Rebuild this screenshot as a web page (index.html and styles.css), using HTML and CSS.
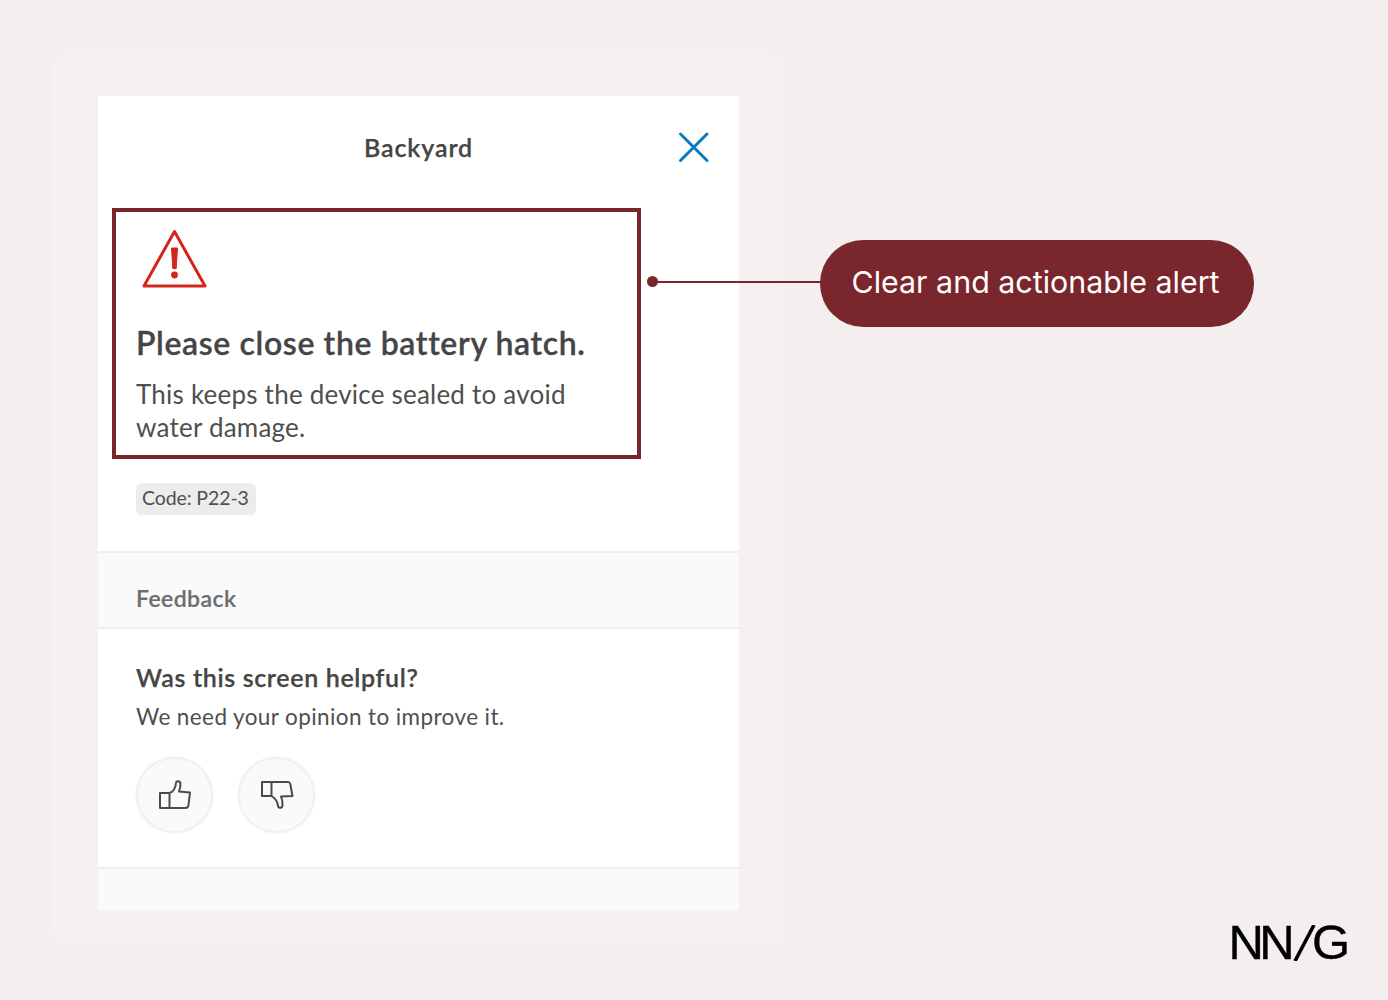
FILE: index.html
```html
<!DOCTYPE html>
<html>
<head>
    <title>Clear and actionable alert</title>
    <link rel="stylesheet" href="styles.css">
</head>
<body>
    <div class="frame">
        <div class="phone">
            <div class="top-bar">
                <span class="top-title">Backyard</span>
                <svg class="close-icon" width="32" height="32" viewBox="0 0 32 32">
                    <path d="M2.5 3 L29 29.5 M29 3 L2.5 29.5" fill="none" stroke="#0a78c2" stroke-width="3" stroke-linecap="round"/>
                </svg>
            </div>

            <div class="alert-box">
                <svg class="warn-icon" width="66" height="60" viewBox="0 0 66 60">
                    <path d="M33.5 2.5 L64 57 H3 Z" fill="none" stroke="#d4251c" stroke-width="3" stroke-linejoin="round"/>
                    <path d="M30.5 19 H36.5 L35.2 39.5 H31.8 Z" fill="#d4251c" stroke="#d4251c" stroke-width="1" stroke-linejoin="round"/>
                    <circle cx="33.5" cy="46" r="3.4" fill="#d4251c"/>
                </svg>
                <h2 class="alert-title">Please close the battery hatch.</h2>
                <p class="alert-text">This keeps the device sealed to avoid water damage.</p>
            </div>

            <div class="code-row">
                <span class="code-tag">Code: P22-3</span>
            </div>

            <div class="section-head">Feedback</div>

            <div class="feedback">
                <h3 class="feedback-title">Was this screen helpful?</h3>
                <p class="feedback-text">We need your opinion to improve it.</p>
                <div class="feedback-btns">
                    <div class="round-btn">
                        <svg width="34" height="30" viewBox="0 0 34 30">
                            <path d="M2 13 H11.5 V28 H2 Z M11.5 13 C15 12 17.5 8 18 3 C18.2 0.6 22 0.6 22.4 3.5 C22.8 6.5 22 9 21 11.5 L32 12.5 L30.5 25 C30.3 27 29 28 27.5 28 H11.5" fill="none" stroke="#4a4a4a" stroke-width="2" stroke-linejoin="round"/>
                        </svg>
                    </div>
                    <div class="round-btn">
                        <svg width="34" height="30" viewBox="0 0 34 30">
                            <path d="M2 2 H11.5 V16 H2 Z M11.5 2 H28 C29.5 2 30 3 30.3 4 L32.5 16 L21 16.5 C22 19 23 22 22.5 25.5 C22 28.5 18.5 28.5 18 26 C17.5 22 15 18 11.5 16" fill="none" stroke="#4a4a4a" stroke-width="2" stroke-linejoin="round"/>
                        </svg>
                    </div>
                </div>
            </div>

            <div class="bottom-strip"></div>
        </div>
    </div>

    <div class="callout-line"></div>
    <div class="callout-dot"></div>
    <div class="callout">Clear and actionable alert</div>
    <div class="logo">
        <span class="logo-nn">NN</span>
        <svg class="logo-slash" width="28" height="36" viewBox="0 0 28 36">
            <path d="M21 0 L2 36" fill="none" stroke="#000" stroke-width="3.6"/>
        </svg>
        <span>G</span>
    </div>
</body>
</html>
```

FILE: styles.css
```css
html, body { margin: 0; padding: 0; }
body { width: 1388px; height: 1000px; background: #f4eeee; font-family: Lato, "Open Sans", sans-serif; position: relative; overflow: hidden; color: #454545; }

.frame { position: absolute; left: 53px; top: 53px; width: 730px; height: 893px; box-sizing: border-box; padding: 43px 44px 36px 45px; background: #f6f1f1; border-radius: 16px; }
.phone { background: #fff; height: 814px; display: flex; flex-direction: column; }

.top-bar { height: 112px; flex: none; display: flex; justify-content: center; align-items: center; position: relative; box-sizing: border-box; padding-bottom: 11px; }
.top-title { font-size: 25px; font-weight: 600; letter-spacing: 0.9px; color: #454545; -webkit-text-stroke: 0.25px #454545; }
.close-icon { position: absolute; left: 580px; top: 35px; }

.alert-box { width: 529px; height: 251px; box-sizing: border-box; margin-left: 14px; border: 4px solid #7a262d; padding: 17px 20px 0 20px; flex: none; }
.warn-icon { display: block; margin-left: 5px; }
.alert-title { margin: 34px 0 0 0; font-size: 32px; line-height: 40px; font-weight: 600; letter-spacing: 0.62px; color: #454545; -webkit-text-stroke: 0.3px #454545; }
.alert-text { margin: 15px 0 0 0; font-size: 26px; line-height: 33px; letter-spacing: 0.22px; color: #4f4f4f; }

.code-row { height: 92px; flex: none; box-sizing: border-box; padding: 24px 0 0 38px; }
.code-tag { display: inline-block; background: #ececec; border-radius: 6px; height: 32px; line-height: 30px; padding: 0 7px 0 6px; font-size: 19.5px; letter-spacing: -0.1px; color: #4f4f4f; }

.section-head { height: 78px; flex: none; box-sizing: border-box; background: #f9fafc; border-top: 2px solid #eeeeee; border-bottom: 2px solid #eeeeee; padding: 30px 0 0 38px; font-size: 23px; line-height: 30px; font-weight: 600; letter-spacing: 0.42px; color: #6e6e6e; -webkit-text-stroke: 0.2px #6e6e6e; }

.feedback { height: 238px; flex: none; box-sizing: border-box; padding: 32px 0 0 38px; }
.feedback-title { margin: 0; font-size: 25px; line-height: 32px; font-weight: 600; letter-spacing: 0.65px; color: #454545; -webkit-text-stroke: 0.25px #454545; }
.feedback-text { margin: 9px 0 0 0; font-size: 22.5px; line-height: 30px; letter-spacing: 0.4px; color: #4f4f4f; }
.feedback-btns { display: flex; gap: 25px; margin-top: 25px; }
.round-btn { width: 77px; height: 76px; box-sizing: border-box; border-radius: 50%; background: #f9fafc; border: 2px solid #f1f1f2; box-shadow: 0 0 2px #e6e6e6; display: flex; align-items: center; justify-content: center; }

.bottom-strip { flex: 1; background: #f9fafc; border-top: 2px solid #eeeeee; }

.callout { position: absolute; left: 820px; top: 240px; width: 434px; height: 87px; box-sizing: border-box; padding-right: 3px; border-radius: 44px; background: #7a262d; color: #fff; font-family: Inter, sans-serif; font-size: 30.4px; line-height: 85px; text-align: center; }
.callout-line { position: absolute; left: 652px; top: 281px; width: 170px; height: 2px; background: #7a262d; }
.callout-dot { position: absolute; left: 647px; top: 276px; width: 11px; height: 11px; border-radius: 50%; background: #7a262d; }

.logo { position: absolute; left: 1228.5px; top: 912px; height: 60px; display: flex; align-items: center; font-family: "Liberation Sans", sans-serif; font-size: 49px; line-height: 60px; color: #000; -webkit-text-stroke: 0.4px #000; }
.logo-nn { letter-spacing: -4.6px; }
.logo-slash { flex: none; margin: 2px -9px 0 3px; }
```
